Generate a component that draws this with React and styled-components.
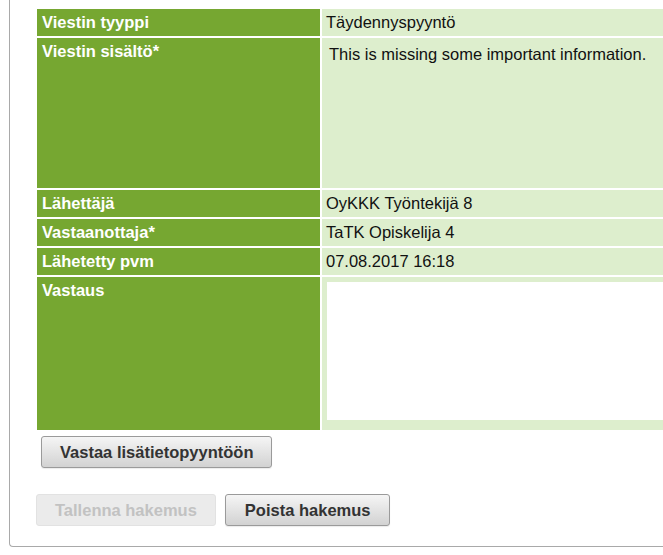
import React from 'react';
import styled, { createGlobalStyle } from 'styled-components';

const GlobalStyle = createGlobalStyle`
  html, body {
    margin: 0;
    padding: 0;
    background: #ffffff;
    overflow: hidden;
  }
  body {
    font-family: 'Liberation Sans', Arial, sans-serif;
    font-size: 16.5px;
  }
`;

const Panel = styled.div`
  margin-left: 9px;
  width: 720px;
  height: 547px;
  box-sizing: border-box;
  padding: 9px 0 0 26px;
  border-left: 1px solid #a9a9a9;
  border-bottom: 1px solid #a9a9a9;
  border-bottom-left-radius: 4px;
`;

const InfoGrid = styled.div`
  display: grid;
  grid-template-columns: 283px 1fr;
  gap: 2px;
  margin-left: 1px;
`;

const Label = styled.div`
  background: #76a731;
  color: #ffffff;
  font-weight: bold;
  line-height: 19px;
  padding: 4px 5px;
  height: ${({ $h }) => $h || 27}px;
  box-sizing: border-box;
`;

const Value = styled.div`
  background: #ddeecd;
  color: #111111;
  line-height: 19px;
  padding: ${({ $pad }) => $pad || '4px 4px'};
  height: ${({ $h }) => $h || 27}px;
  box-sizing: border-box;
`;

const Content = styled.div`
  padding: 3px;
`;

const Reply = styled.div`
  width: 100%;
  height: 138px;
  background: #ffffff;
`;

const ButtonRow = styled.div`
  display: flex;
  gap: 9px;
  margin: ${({ $m }) => $m};
`;

const Button = styled.button`
  font-family: 'Liberation Sans', Arial, sans-serif;
  font-size: 16.5px;
  font-weight: bold;
  height: 32px;
  padding: 0 ${({ $px }) => $px || 18}px;
  border-radius: 3px;
  box-sizing: border-box;
  border: 1px solid #9a9a9a;
  color: #333333;
  background: linear-gradient(#f5f5f5, #d2d2d2);
  box-shadow: 0 1px 1px rgba(0, 0, 0, 0.08);

  &:disabled {
    color: #c2c2c2;
    border-color: #e2e2e2;
    background: #ebebeb;
    box-shadow: none;
  }
`;

export default function App() {
  return (
    <>
      <GlobalStyle />
      <Panel>
        <InfoGrid>
          <Label>Viestin tyyppi</Label>
          <Value>Täydennyspyyntö</Value>
          <Label $h={150}>Viestin sisältö*</Label>
          <Value $h={150}>
            <Content>This is missing some important information.</Content>
          </Value>
          <Label>Lähettäjä</Label>
          <Value>OyKKK Työntekijä 8</Value>
          <Label>Vastaanottaja*</Label>
          <Value>TaTK Opiskelija 4</Value>
          <Label>Lähetetty pvm</Label>
          <Value>07.08.2017 16:18</Value>
          <Label $h={153}>Vastaus</Label>
          <Value $h={153} $pad="5px 0 10px 5px">
            <Reply />
          </Value>
        </InfoGrid>
        <ButtonRow $m="6px 0 0 5px">
          <Button $px={18}>Vastaa lisätietopyyntöön</Button>
        </ButtonRow>
        <ButtonRow $m="26px 0 0 0">
          <Button disabled $px={18}>Tallenna hakemus</Button>
          <Button $px={19}>Poista hakemus</Button>
        </ButtonRow>
      </Panel>
    </>
  );
}
